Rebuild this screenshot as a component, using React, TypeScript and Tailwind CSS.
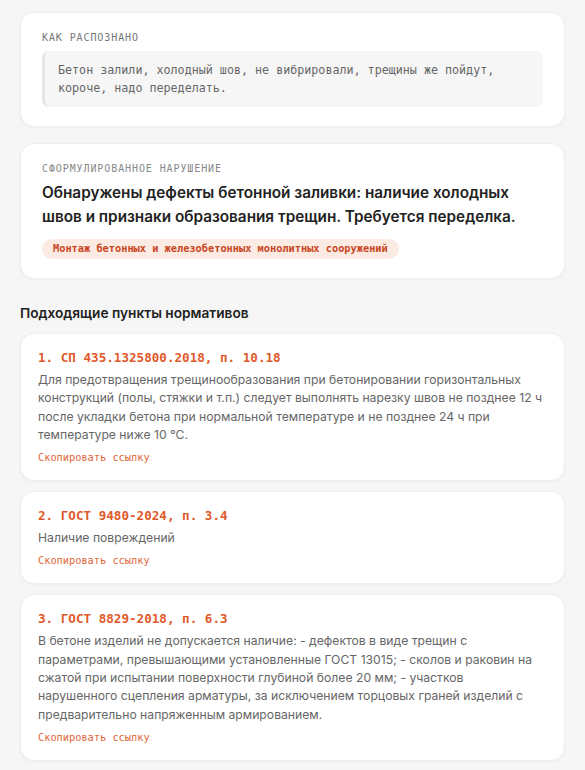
import React from "react";

const mono = "font-['DejaVu_Sans_Mono','Liberation_Mono',monospace]";
const sans = "font-['Inter','Noto_Sans',sans-serif]";

const items = [
  {
    title: "1. СП 435.1325800.2018, п. 10.18",
    text: "Для предотвращения трещинообразования при бетонировании горизонтальных конструкций (полы, стяжки и т.п.) следует выполнять нарезку швов не позднее 12 ч после укладки бетона при нормальной температуре и не позднее 24 ч при температуре ниже 10 °C.",
    width: "",
  },
  { title: "2. ГОСТ 9480-2024, п. 3.4", text: "Наличие повреждений", width: "" },
  {
    title: "3. ГОСТ 8829-2018, п. 6.3",
    text: "В бетоне изделий не допускается наличие: - дефектов в виде трещин с параметрами, превышающими установленные ГОСТ 13015; - сколов и раковин на сжатой при испытании поверхности глубиной более 20 мм; - участков нарушенного сцепления арматуры, за исключением торцовых граней изделий с предварительно напряженным армированием.",
    width: "max-w-[498px]",
  },
];

const card =
  "bg-white rounded-[14px] border border-[#efefef] shadow-[0_1px_3px_rgba(0,0,0,0.04)]";

export default function App() {
  return (
    <div className={`h-[770px] overflow-hidden bg-[#f6f6f6] px-5 pt-3 ${sans}`}>
      <div className={`${card} px-[21px] pt-[19px] pb-[19px]`}>
        <div className={`${mono} text-[10px] leading-[12px] tracking-[0.09em] text-[#777]`}>
          КАК РАСПОЗНАНО
        </div>
        <div className="mt-[7px] rounded-[7px] border-l-[3px] border-[#e6e6e6] bg-[#f6f6f6] pl-[13px] pr-3 py-[10px]">
          <p className={`${mono} text-[11.7px] leading-[18px] text-[#666]`}>
            Бетон залили, холодный шов, не вибрировали, трещины же пойдут, короче, надо переделать.
          </p>
        </div>
      </div>

      <div className={`${card} mt-4 px-[21px] pt-[19px] pb-[19px]`}>
        <div className={`${mono} text-[10px] leading-[12px] tracking-[0.09em] text-[#888]`}>
          СФОРМУЛИРОВАННОЕ НАРУШЕНИЕ
        </div>
        <h2 className="mt-[6px] text-[15.3px] leading-[24px] font-semibold text-[#222]">
          Обнаружены дефекты бетонной заливки: наличие холодных швов и признаки образования трещин. Требуется переделка.
        </h2>
        <div className="mt-[10px] flex">
          <span
            className={`${mono} rounded-full bg-[#fbebe3] px-[11px] h-[20px] flex items-center text-[10.3px] font-bold text-[#c9471f]`}
          >
            Монтаж бетонных и железобетонных монолитных сооружений
          </span>
        </div>
      </div>

      <h3 className="mt-6 text-[13.7px] leading-[20px] font-semibold text-[#222]">
        Подходящие пункты нормативов
      </h3>

      <div className="mt-[10px] flex flex-col gap-[10px]">
        {items.map((it) => (
          <div key={it.title} className={`${card} px-[17px] pt-[15px] pb-[15px]`}>
            <div className={`${mono} text-[12.6px] leading-[18px] font-bold text-[#df5a2b]`}>
              {it.title}
            </div>
            <p className={`mt-[4px] text-[12.2px] leading-[18.3px] text-[#666] ${it.width}`}>
              {it.text}
            </p>
            <div className={`${mono} mt-[6px] text-[10.3px] leading-[15px] text-[#e0673a]`}>
              Скопировать ссылку
            </div>
          </div>
        ))}
        <div className={`${card} h-[60px]`} />
      </div>
    </div>
  );
}
